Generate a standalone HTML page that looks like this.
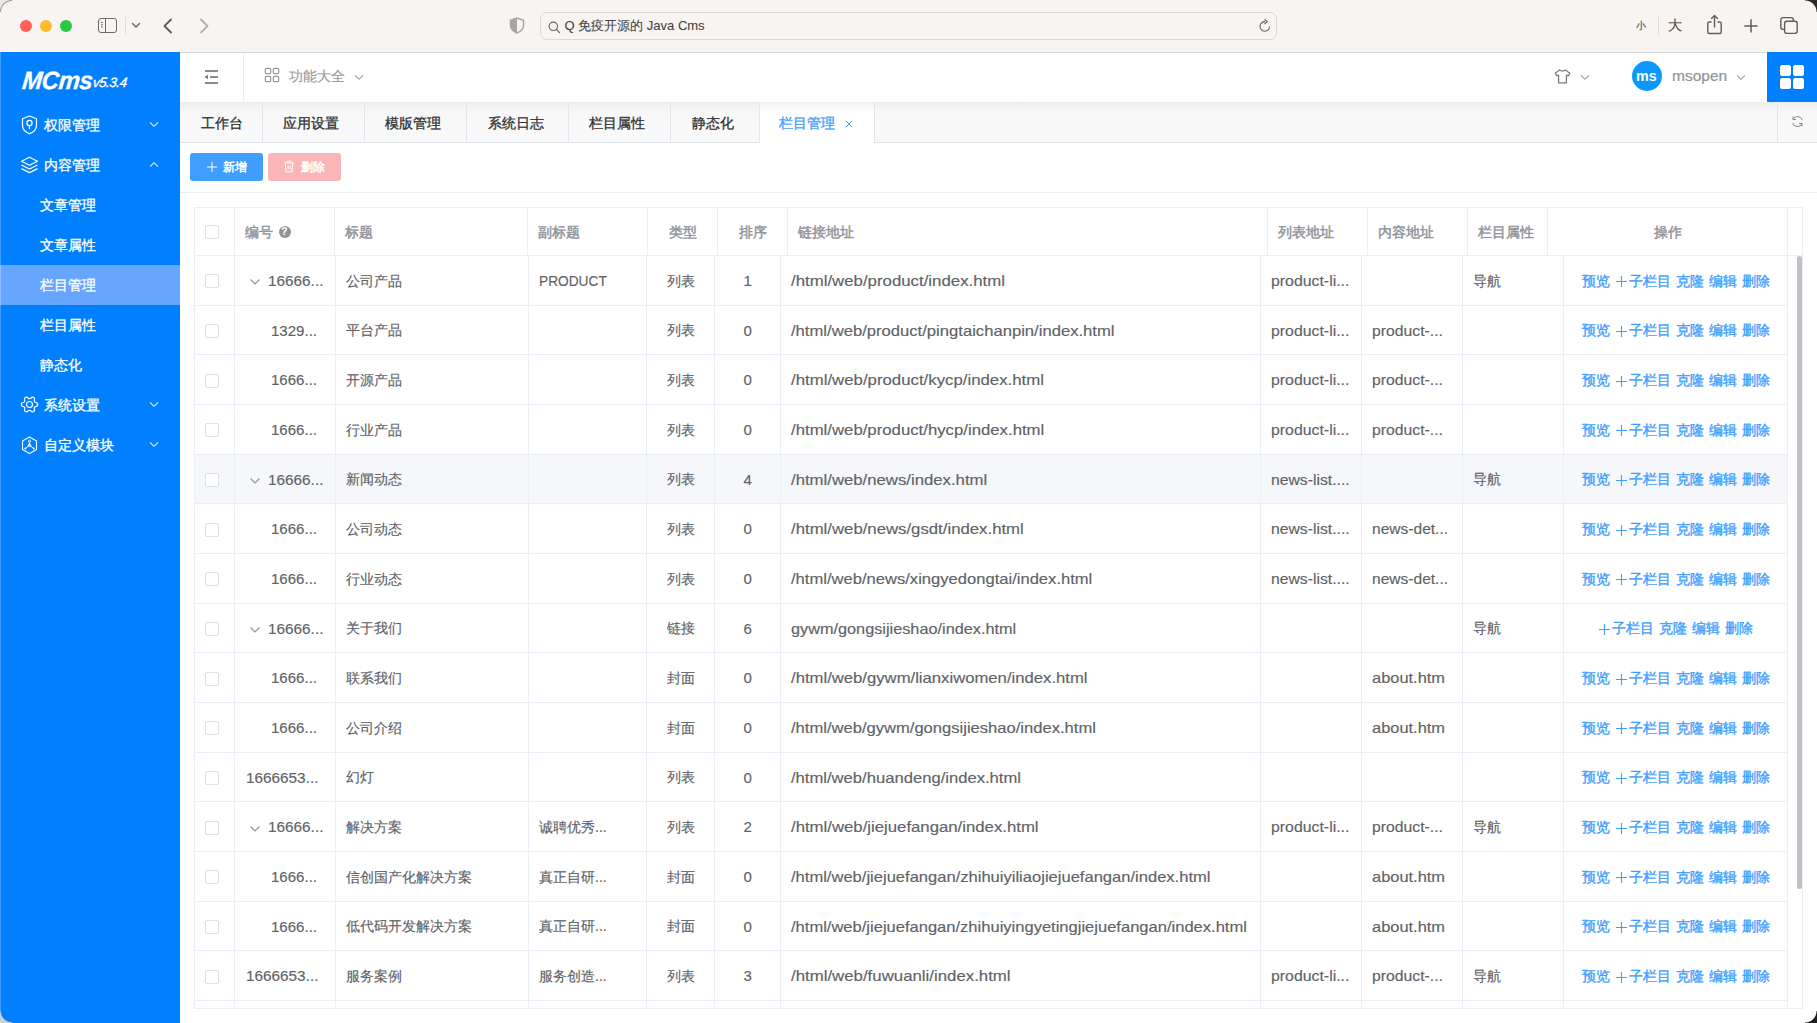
<!DOCTYPE html>
<html><head><meta charset="utf-8"><title>MCms</title>
<style>
html,body{margin:0;padding:0;}
body{width:1817px;height:1023px;overflow:hidden;position:relative;background:#fff;font-family:"Liberation Sans",sans-serif;}
body>div,body>svg{position:absolute;box-sizing:content-box;}
.t{white-space:nowrap;transform-origin:0 0;}
.b{-webkit-text-stroke-width:0.15px;}
.t{-webkit-text-stroke-width:0.15px;}
</style></head><body>
<div style="left:0;top:0;width:1817px;height:52px;background:#f8f4f1"></div>
<div style="left:0;top:52px;width:1817px;height:1px;background:#d9d6d4"></div>
<div style="left:20px;top:20px;width:12px;height:12px;border-radius:50%;background:#fe5f57"></div>
<div style="left:40px;top:20px;width:12px;height:12px;border-radius:50%;background:#febb2e"></div>
<div style="left:60px;top:20px;width:12px;height:12px;border-radius:50%;background:#28c840"></div>
<div style="left:98px;top:18px;width:16.5px;height:12.5px;border:1.5px solid #6b6b6b;border-radius:3px"></div>
<div style="left:104.5px;top:18px;width:1.5px;height:14.5px;background:#6b6b6b"></div>
<div style="left:101px;top:21.5px;width:1.5px;height:1.2px;background:#777;box-shadow:0 2.2px 0 #777,0 4.4px 0 #777"></div>
<div style="left:125px;top:17px;width:1px;height:17px;background:#e0dcda"></div>
<svg style="left:131px;top:22px;" width="10" height="7" viewBox="0 0 10 7"><path d="M1.5 1.5 L5 5 L8.5 1.5" fill="none" stroke="#6b6b6b" stroke-width="1.5" stroke-linecap="round" stroke-linejoin="round"/></svg>
<svg style="left:162px;top:18px;" width="12" height="16" viewBox="0 0 12 16"><path d="M9 1.5 L2.5 8 L9 14.5" fill="none" stroke="#5a5a5a" stroke-width="1.8" stroke-linecap="round" stroke-linejoin="round"/></svg>
<svg style="left:198px;top:18px;" width="12" height="16" viewBox="0 0 12 16"><path d="M3 1.5 L9.5 8 L3 14.5" fill="none" stroke="#b0adab" stroke-width="1.8" stroke-linecap="round" stroke-linejoin="round"/></svg>
<svg style="left:509px;top:17px;" width="16" height="17" viewBox="0 0 16 17"><path d="M8 1 L14.5 3.2 L14.5 8.5 C14.5 12 11.5 14.5 8 16 C4.5 14.5 1.5 12 1.5 8.5 L1.5 3.2 Z" fill="none" stroke="#a9a6a4" stroke-width="1.5"/><path d="M8 1 L1.5 3.2 L1.5 8.5 C1.5 12 4.5 14.5 8 16 Z" fill="#a9a6a4"/></svg>
<div style="left:540px;top:12px;width:735px;height:26px;border:1px solid #dcd8d6;border-radius:7px;background:#f8f4f1"></div>
<svg style="left:547.5px;top:20.5px;" width="14" height="14" viewBox="0 0 14 14"><circle cx="5.3" cy="5.3" r="4.2" fill="none" stroke="#666" stroke-width="1.1"/><path d="M8.4 8.4 L11.6 11.6" stroke="#666" stroke-width="1.3" stroke-linecap="round"/></svg>
<div class="t" style="left:564.5px;top:16px;font-size:13px;line-height:20px;color:#454545;font-weight:400;-webkit-text-stroke-width:0.1px;">Q 免疫开源的 Java Cms</div>
<svg style="left:1259px;top:18px;" width="13" height="15" viewBox="0 0 13 15"><path d="M10.6 8.5 A4.8 4.8 0 1 1 6.2 3.6" fill="none" stroke="#666" stroke-width="1.1"/><path d="M5.5 1.2 L8.2 3.6 L5.5 6" fill="none" stroke="#666" stroke-width="1.1" stroke-linejoin="round"/></svg>
<div class="t" style="left:1636px;top:16px;font-size:10px;line-height:20px;color:#4a4a4a;font-weight:400;">小</div>
<div style="left:1658px;top:17px;width:1px;height:18px;background:#dedad8"></div>
<div class="t" style="left:1668px;top:15px;font-size:14px;line-height:20px;color:#4a4a4a;font-weight:400;">大</div>
<svg style="left:1706px;top:14px;" width="17" height="21" viewBox="0 0 17 21"><path d="M5.5 8 L3.3 8 Q1.8 8 1.8 9.5 L1.8 18 Q1.8 19.5 3.3 19.5 L13.7 19.5 Q15.2 19.5 15.2 18 L15.2 9.5 Q15.2 8 13.7 8 L11.5 8" fill="none" stroke="#5e5e5e" stroke-width="1.4"/><path d="M8.5 13 L8.5 1.8 M5.5 4.6 L8.5 1.6 L11.5 4.6" fill="none" stroke="#5e5e5e" stroke-width="1.4" stroke-linecap="round" stroke-linejoin="round"/></svg>
<svg style="left:1743px;top:17.5px;" width="16" height="16" viewBox="0 0 16 16"><path d="M8 1.8 L8 14 M1.8 8 L14 8" stroke="#5e5e5e" stroke-width="1.5" stroke-linecap="round"/></svg>
<svg style="left:1779px;top:16px;" width="20" height="19" viewBox="0 0 20 19"><rect x="1.8" y="1.6" width="12.6" height="11.8" rx="2.4" fill="none" stroke="#5e5e5e" stroke-width="1.4"/><rect x="5.6" y="5.2" width="12.6" height="12.2" rx="2.4" fill="#f8f4f1" stroke="#5e5e5e" stroke-width="1.4"/></svg>
<div style="left:0;top:52px;width:180px;height:971px;background:#0080ff"></div>
<div class="t" style="left:21px;top:65px;font-size:25px;line-height:30px;color:#fff;font-weight:700;font-style:italic;letter-spacing:-0.5px;transform:scaleX(0.96) skewX(-6deg);transform-origin:0 100%;-webkit-text-stroke-width:0.3px">MCms</div>
<div class="t" style="left:91.5px;top:74.5px;font-size:13.5px;line-height:16px;color:#fff;font-weight:400;font-style:italic;letter-spacing:-0.5px;transform:skewX(-6deg);transform-origin:0 100%;-webkit-text-stroke-width:0.35px">v5.3.4</div>
<div style="left:0;top:265px;width:180px;height:40px;background:#66a6ff"></div>
<div class="t" style="left:43.5px;top:114.7px;font-size:14px;line-height:20px;color:#ffffff;font-weight:400;-webkit-text-stroke-width:0.3px;">权限管理</div>
<svg style="left:149px;top:120.5px;opacity:.9" width="10" height="7" viewBox="0 0 10 7"><path d="M1 1.3 L5 5.3 L9 1.3" fill="none" stroke="#fff" stroke-width="1.1"/></svg>
<div class="t" style="left:43.5px;top:154.7px;font-size:14px;line-height:20px;color:#ffffff;font-weight:400;-webkit-text-stroke-width:0.3px;">内容管理</div>
<svg style="left:149px;top:161.0px;opacity:.9" width="10" height="7" viewBox="0 0 10 7"><path d="M1 5.7 L5 1.7 L9 5.7" fill="none" stroke="#fff" stroke-width="1.1"/></svg>
<div class="t" style="left:43.5px;top:394.7px;font-size:14px;line-height:20px;color:#ffffff;font-weight:400;-webkit-text-stroke-width:0.3px;">系统设置</div>
<svg style="left:149px;top:400.5px;opacity:.9" width="10" height="7" viewBox="0 0 10 7"><path d="M1 1.3 L5 5.3 L9 1.3" fill="none" stroke="#fff" stroke-width="1.1"/></svg>
<div class="t" style="left:43.5px;top:434.7px;font-size:14px;line-height:20px;color:#ffffff;font-weight:400;-webkit-text-stroke-width:0.3px;">自定义模块</div>
<svg style="left:149px;top:440.5px;opacity:.9" width="10" height="7" viewBox="0 0 10 7"><path d="M1 1.3 L5 5.3 L9 1.3" fill="none" stroke="#fff" stroke-width="1.1"/></svg>
<svg style="left:21px;top:115px;" width="17" height="20" viewBox="0 0 17 20"><path d="M8.5 1 L15.5 3.8 L15.5 10.5 C15.5 14.5 12 17.3 8.5 18.8 C5 17.3 1.5 14.5 1.5 10.5 L1.5 3.8 Z" fill="none" stroke="#fff" stroke-width="1.2" stroke-linejoin="round"/><circle cx="8.5" cy="8" r="2.6" fill="none" stroke="#fff" stroke-width="1.2"/><path d="M8.5 10.6 L8.5 14" stroke="#fff" stroke-width="1.2"/></svg>
<svg style="left:20px;top:156px;" width="19" height="18" viewBox="0 0 19 18"><path d="M9.5 1.2 L17.5 5.2 L9.5 9.2 L1.5 5.2 Z" fill="none" stroke="#fff" stroke-width="1.2" stroke-linejoin="round"/><path d="M1.5 9 L9.5 13 L17.5 9" fill="none" stroke="#fff" stroke-width="1.2" stroke-linejoin="round"/><path d="M1.5 12.6 L9.5 16.6 L17.5 12.6" fill="none" stroke="#fff" stroke-width="1.2" stroke-linejoin="round"/></svg>
<svg style="left:20px;top:395.2px;" width="19" height="19" viewBox="0 0 19 19"><path d="M17.65 9.50 L17.60 9.92 L17.47 10.34 L17.24 10.73 L16.90 11.07 L16.26 11.31 L15.62 11.49 L15.25 11.71 L14.97 11.94 L14.74 12.17 L14.57 12.42 L14.43 12.70 L14.34 13.02 L14.29 13.38 L14.28 13.80 L14.45 14.45 L14.56 15.12 L14.43 15.59 L14.21 15.98 L13.92 16.31 L13.58 16.56 L13.18 16.73 L12.76 16.82 L12.31 16.82 L11.84 16.70 L11.31 16.26 L10.84 15.79 L10.46 15.59 L10.13 15.45 L9.81 15.38 L9.50 15.35 L9.19 15.38 L8.87 15.45 L8.54 15.59 L8.16 15.79 L7.69 16.26 L7.16 16.70 L6.69 16.82 L6.24 16.82 L5.82 16.73 L5.43 16.56 L5.08 16.31 L4.79 15.98 L4.57 15.59 L4.44 15.12 L4.55 14.45 L4.72 13.80 L4.71 13.38 L4.66 13.02 L4.57 12.70 L4.43 12.42 L4.26 12.17 L4.03 11.94 L3.75 11.71 L3.38 11.49 L2.74 11.31 L2.10 11.07 L1.76 10.73 L1.53 10.34 L1.40 9.92 L1.35 9.50 L1.40 9.08 L1.53 8.66 L1.76 8.27 L2.10 7.93 L2.74 7.69 L3.38 7.51 L3.75 7.29 L4.03 7.06 L4.26 6.83 L4.43 6.58 L4.57 6.30 L4.66 5.98 L4.71 5.62 L4.72 5.20 L4.55 4.55 L4.44 3.88 L4.57 3.41 L4.79 3.02 L5.08 2.69 L5.42 2.44 L5.82 2.27 L6.24 2.18 L6.69 2.18 L7.16 2.30 L7.69 2.74 L8.16 3.21 L8.54 3.41 L8.87 3.55 L9.19 3.62 L9.50 3.65 L9.81 3.62 L10.13 3.55 L10.46 3.41 L10.84 3.21 L11.31 2.74 L11.84 2.30 L12.31 2.18 L12.76 2.18 L13.18 2.27 L13.58 2.44 L13.92 2.69 L14.21 3.02 L14.43 3.41 L14.56 3.88 L14.45 4.55 L14.28 5.20 L14.29 5.62 L14.34 5.98 L14.43 6.30 L14.57 6.58 L14.74 6.83 L14.97 7.06 L15.25 7.29 L15.62 7.51 L16.26 7.69 L16.90 7.93 L17.24 8.27 L17.47 8.66 L17.60 9.08 Z" fill="none" stroke="#fff" stroke-width="1.2" stroke-linejoin="round"/><circle cx="9.5" cy="9.5" r="3" fill="none" stroke="#fff" stroke-width="1.2"/></svg>
<svg style="left:21px;top:435.5px;" width="17" height="19" viewBox="0 0 17 19"><path d="M8.5 1 L15.5 5 L15.5 13.5 L8.5 17.5 L1.5 13.5 L1.5 5 Z" fill="none" stroke="#fff" stroke-width="1.1" stroke-linejoin="round"/><circle cx="8.5" cy="5.2" r="1.1" fill="none" stroke="#fff" stroke-width="0.9"/><path d="M8.5 6.3 L8.5 9.2 M8.5 9.2 L4.8 12.2 M8.5 9.2 L12.2 12.2" fill="none" stroke="#fff" stroke-width="1"/><circle cx="8.5" cy="9.2" r="1.3" fill="none" stroke="#fff" stroke-width="0.9"/><circle cx="4.3" cy="12.6" r="1" fill="#fff"/><circle cx="12.7" cy="12.6" r="1" fill="#fff"/></svg>
<div class="t" style="left:40px;top:194.7px;font-size:14px;line-height:20px;color:#ffffff;font-weight:400;-webkit-text-stroke-width:0.3px;">文章管理</div>
<div class="t" style="left:40px;top:234.7px;font-size:14px;line-height:20px;color:#ffffff;font-weight:400;-webkit-text-stroke-width:0.3px;">文章属性</div>
<div class="t" style="left:40px;top:274.7px;font-size:14px;line-height:20px;color:#ffffff;font-weight:400;-webkit-text-stroke-width:0.3px;">栏目管理</div>
<div class="t" style="left:40px;top:314.7px;font-size:14px;line-height:20px;color:#ffffff;font-weight:400;-webkit-text-stroke-width:0.3px;">栏目属性</div>
<div class="t" style="left:40px;top:354.7px;font-size:14px;line-height:20px;color:#ffffff;font-weight:400;-webkit-text-stroke-width:0.3px;">静态化</div>
<div style="left:180px;top:53px;width:1637px;height:49px;background:#fff;z-index:2"></div>
<svg style="left:204px;top:69px;z-index:3;" width="16" height="16" viewBox="0 0 16 16"><path d="M1 2 L14 2 M6 8 L14 8 M1 14 L14 14" stroke="#666" stroke-width="1.7"/><path d="M0.8 8 L3.8 5.8 L3.8 10.2 Z" fill="#666"/></svg>
<div style="left:243px;top:53px;width:1px;height:49px;background:#ececec;z-index:3;"></div>
<svg style="left:264px;top:67px;z-index:3;" width="16" height="16" viewBox="0 0 16 16"><rect x="1.3" y="1.3" width="5.4" height="5.4" rx="1.2" fill="none" stroke="#999" stroke-width="1.2"/><rect x="9.3" y="1.3" width="5.4" height="5.4" rx="1.2" fill="none" stroke="#999" stroke-width="1.2"/><rect x="1.3" y="9.3" width="5.4" height="5.4" rx="1.2" fill="none" stroke="#999" stroke-width="1.2"/><rect x="9.3" y="9.3" width="5.4" height="5.4" rx="1.2" fill="none" stroke="#999" stroke-width="1.2"/></svg>
<div class="t" style="left:289px;top:66px;font-size:14px;line-height:20px;color:#9a9a9a;font-weight:400;z-index:3;">功能大全</div>
<svg style="left:354px;top:74px;z-index:3;" width="10" height="7" viewBox="0 0 10 7"><path d="M1 1.3 L5 5.3 L9 1.3" fill="none" stroke="#a0a0a0" stroke-width="1.1"/></svg>
<svg style="left:1554px;top:68.5px;z-index:3;" width="17" height="15" viewBox="0 0 17 15"><path d="M5.6 0.9 Q8.5 3.2 11.4 0.9 L15.8 4.3 L14.2 6.9 L12.4 6 L12.4 13.9 L4.6 13.9 L4.6 6 L2.8 6.9 L1.2 4.3 Z" fill="none" stroke="#777" stroke-width="1.2" stroke-linejoin="round"/></svg>
<svg style="left:1580px;top:74px;z-index:3;" width="10" height="7" viewBox="0 0 10 7"><path d="M1 1.3 L5 5.3 L9 1.3" fill="none" stroke="#a0a0a0" stroke-width="1.1"/></svg>
<div style="left:1632px;top:61px;width:30px;height:30px;border-radius:50%;background:#0a98ff;z-index:3;"></div>
<div class="t" style="left:1635.8px;top:65.5px;font-size:15.5px;line-height:20px;color:#fff;font-weight:700;transform:scaleX(0.9200);z-index:3;-webkit-text-stroke-width:0px;">ms</div>
<div class="t" style="left:1671.8px;top:66px;font-size:15px;line-height:20px;color:#909399;font-weight:400;transform:scaleX(1.0337);z-index:3;-webkit-text-stroke-width:0.2px;">msopen</div>
<svg style="left:1736px;top:74px;z-index:3;" width="10" height="7" viewBox="0 0 10 7"><path d="M1 1.3 L5 5.3 L9 1.3" fill="none" stroke="#a0a0a0" stroke-width="1.1"/></svg>
<div style="left:1767px;top:52px;width:50px;height:50px;background:#0080ff;z-index:3;"></div>
<svg style="left:1780px;top:65px;z-index:3;" width="24" height="24" viewBox="0 0 24 24"><rect x="0" y="0" width="11" height="11" rx="2.2" fill="#fff"/><rect x="13" y="0" width="11" height="11" rx="2.2" fill="#fff"/><rect x="0" y="13" width="11" height="11" rx="2.2" fill="#fff"/><rect x="13" y="13" width="11" height="11" rx="2.2" fill="#fff"/></svg>
<div style="left:180px;top:102px;width:1637px;height:40px;background:linear-gradient(to bottom,#ececec 0,#f4f4f4 5px,#f8f8f8 12px,#f9f9f9 100%)"></div>
<div style="left:180px;top:142px;width:1637px;height:1px;background:#dfe3ea"></div>
<div style="left:262px;top:102px;width:1px;height:40px;background:#e2e5ec"></div>
<div style="left:364px;top:102px;width:1px;height:40px;background:#e2e5ec"></div>
<div style="left:466px;top:102px;width:1px;height:40px;background:#e2e5ec"></div>
<div style="left:568px;top:102px;width:1px;height:40px;background:#e2e5ec"></div>
<div style="left:670px;top:102px;width:1px;height:40px;background:#e2e5ec"></div>
<div style="left:759px;top:102px;width:1px;height:40px;background:#e2e5ec"></div>
<div style="left:874px;top:102px;width:1px;height:40px;background:#e2e5ec"></div>
<div style="left:1777px;top:102px;width:1px;height:40px;background:#e2e5ec"></div>
<div style="left:760px;top:102px;width:114px;height:41px;background:linear-gradient(to bottom,#f0f0f0 0,#fafafa 6px,#fff 12px)"></div>
<div class="t" style="left:201px;top:112.5px;font-size:14px;line-height:20px;color:#303133;font-weight:400;-webkit-text-stroke-width:0.3px;">工作台</div>
<div class="t" style="left:283px;top:112.5px;font-size:14px;line-height:20px;color:#303133;font-weight:400;-webkit-text-stroke-width:0.3px;">应用设置</div>
<div class="t" style="left:385px;top:112.5px;font-size:14px;line-height:20px;color:#303133;font-weight:400;-webkit-text-stroke-width:0.3px;">模版管理</div>
<div class="t" style="left:487.5px;top:112.5px;font-size:14px;line-height:20px;color:#303133;font-weight:400;-webkit-text-stroke-width:0.3px;">系统日志</div>
<div class="t" style="left:589px;top:112.5px;font-size:14px;line-height:20px;color:#303133;font-weight:400;-webkit-text-stroke-width:0.3px;">栏目属性</div>
<div class="t" style="left:692px;top:112.5px;font-size:14px;line-height:20px;color:#303133;font-weight:400;-webkit-text-stroke-width:0.3px;">静态化</div>
<div class="t" style="left:779px;top:112.5px;font-size:14px;line-height:20px;color:#409eff;font-weight:400;-webkit-text-stroke-width:0.3px;">栏目管理</div>
<svg style="left:845px;top:120px;" width="8" height="8" viewBox="0 0 8 8"><path d="M0.8 0.8 L7.2 7.2 M7.2 0.8 L0.8 7.2" stroke="#409eff" stroke-width="1"/></svg>
<svg style="left:1791px;top:115px;" width="13" height="13" viewBox="0 0 13 13"><path d="M11.3 5.2 A5 5 0 0 0 2 4.2" fill="none" stroke="#8a8a8a" stroke-width="1"/><path d="M1.7 7.8 A5 5 0 0 0 11 8.8" fill="none" stroke="#8a8a8a" stroke-width="1"/><path d="M2 1.5 L2 4.5 L5 4.5" fill="none" stroke="#8a8a8a" stroke-width="1"/><path d="M11 11.5 L11 8.5 L8 8.5" fill="none" stroke="#8a8a8a" stroke-width="1"/></svg>
<div style="left:190px;top:153px;width:72.5px;height:27.5px;background:#409eff;border-radius:3px"></div>
<svg style="left:207px;top:161.5px;" width="10" height="10" viewBox="0 0 10 10"><path d="M5 0 L5 10 M0 5 L10 5" stroke="#fff" stroke-width="1"/></svg>
<div class="t" style="left:222.5px;top:157px;font-size:12px;line-height:20px;color:#fff;font-weight:700;-webkit-text-stroke-width:0px;">新增</div>
<div style="left:268px;top:153px;width:72.5px;height:27.5px;background:#fab6b6;border-radius:3px"></div>
<svg style="left:283px;top:160px;" width="12" height="13" viewBox="0 0 12 13"><path d="M1 3 L11 3 M4.2 3 L4.2 1.2 L7.8 1.2 L7.8 3 M2.5 3.5 L2.8 11.8 L9.2 11.8 L9.5 3.5 M5 5.5 L5 9.5 M7 5.5 L7 9.5" fill="none" stroke="#fff" stroke-width="1"/></svg>
<div class="t" style="left:300.5px;top:157px;font-size:12px;line-height:20px;color:#fff;font-weight:700;-webkit-text-stroke-width:0px;">删除</div>
<div style="left:180px;top:192px;width:1637px;height:1px;background:#ebeef5"></div>
<div style="left:194px;top:454px;width:1593px;height:49px;background:#f5f7fa"></div>
<div style="left:1797px;top:256px;width:5px;height:633px;background:#c1c1c5;border-radius:3px"></div>
<div style="left:194px;top:207px;width:1609px;height:1px;background:#ebeef5"></div>
<div style="left:194px;top:1008px;width:1609px;height:1px;background:#ebeef5"></div>
<div style="left:194px;top:207px;width:1px;height:802px;background:#ebeef5"></div>
<div style="left:1802px;top:207px;width:1px;height:802px;background:#ebeef5"></div>
<div style="left:194px;top:255px;width:1608px;height:1px;background:#ebeef5"></div>
<div style="left:234px;top:207px;width:1px;height:48px;background:#ebeef5"></div>
<div style="left:334px;top:207px;width:1px;height:48px;background:#ebeef5"></div>
<div style="left:527px;top:207px;width:1px;height:48px;background:#ebeef5"></div>
<div style="left:647px;top:207px;width:1px;height:48px;background:#ebeef5"></div>
<div style="left:717px;top:207px;width:1px;height:48px;background:#ebeef5"></div>
<div style="left:787px;top:207px;width:1px;height:48px;background:#ebeef5"></div>
<div style="left:1267px;top:207px;width:1px;height:48px;background:#ebeef5"></div>
<div style="left:1367px;top:207px;width:1px;height:48px;background:#ebeef5"></div>
<div style="left:1467px;top:207px;width:1px;height:48px;background:#ebeef5"></div>
<div style="left:1547px;top:207px;width:1px;height:48px;background:#ebeef5"></div>
<div style="left:1787px;top:207px;width:1px;height:48px;background:#ebeef5"></div>
<div style="left:234px;top:255px;width:1px;height:753px;background:#ebeef5"></div>
<div style="left:335px;top:255px;width:1px;height:753px;background:#ebeef5"></div>
<div style="left:528px;top:255px;width:1px;height:753px;background:#ebeef5"></div>
<div style="left:646px;top:255px;width:1px;height:753px;background:#ebeef5"></div>
<div style="left:714px;top:255px;width:1px;height:753px;background:#ebeef5"></div>
<div style="left:780px;top:255px;width:1px;height:753px;background:#ebeef5"></div>
<div style="left:1260px;top:255px;width:1px;height:753px;background:#ebeef5"></div>
<div style="left:1361px;top:255px;width:1px;height:753px;background:#ebeef5"></div>
<div style="left:1462px;top:255px;width:1px;height:753px;background:#ebeef5"></div>
<div style="left:1563px;top:255px;width:1px;height:753px;background:#ebeef5"></div>
<div style="left:1787px;top:255px;width:1px;height:753px;background:#ebeef5"></div>
<div style="left:194px;top:305px;width:1593px;height:1px;background:#ebeef5"></div>
<div style="left:194px;top:354px;width:1593px;height:1px;background:#ebeef5"></div>
<div style="left:194px;top:404px;width:1593px;height:1px;background:#ebeef5"></div>
<div style="left:194px;top:454px;width:1593px;height:1px;background:#ebeef5"></div>
<div style="left:194px;top:503px;width:1593px;height:1px;background:#ebeef5"></div>
<div style="left:194px;top:553px;width:1593px;height:1px;background:#ebeef5"></div>
<div style="left:194px;top:603px;width:1593px;height:1px;background:#ebeef5"></div>
<div style="left:194px;top:652px;width:1593px;height:1px;background:#ebeef5"></div>
<div style="left:194px;top:702px;width:1593px;height:1px;background:#ebeef5"></div>
<div style="left:194px;top:752px;width:1593px;height:1px;background:#ebeef5"></div>
<div style="left:194px;top:801px;width:1593px;height:1px;background:#ebeef5"></div>
<div style="left:194px;top:851px;width:1593px;height:1px;background:#ebeef5"></div>
<div style="left:194px;top:901px;width:1593px;height:1px;background:#ebeef5"></div>
<div style="left:194px;top:950px;width:1593px;height:1px;background:#ebeef5"></div>
<div style="left:194px;top:1000px;width:1593px;height:1px;background:#ebeef5"></div>
<div style="left:205px;top:225px;width:12px;height:12px;border:1px solid #dcdfe6;border-radius:2px;background:#fff"></div>
<div class="t" style="left:245px;top:222px;font-size:14px;line-height:20px;color:#909399;font-weight:400;-webkit-text-stroke-width:0.45px;">编号</div>
<div style="left:278.5px;top:225.5px;width:12.5px;height:12.5px;border-radius:50%;background:#909399"></div>
<div class="t" style="left:281.3px;top:224.5px;font-size:10px;line-height:14px;color:#fff;font-weight:700;">?</div>
<div class="t" style="left:345px;top:222px;font-size:14px;line-height:20px;color:#909399;font-weight:400;-webkit-text-stroke-width:0.45px;">标题</div>
<div class="t" style="left:538px;top:222px;font-size:14px;line-height:20px;color:#909399;font-weight:400;-webkit-text-stroke-width:0.45px;">副标题</div>
<div class="t" style="left:668.5px;top:222px;font-size:14px;line-height:20px;color:#909399;font-weight:400;-webkit-text-stroke-width:0.45px;">类型</div>
<div class="t" style="left:738.5px;top:222px;font-size:14px;line-height:20px;color:#909399;font-weight:400;-webkit-text-stroke-width:0.45px;">排序</div>
<div class="t" style="left:798px;top:222px;font-size:14px;line-height:20px;color:#909399;font-weight:400;-webkit-text-stroke-width:0.45px;">链接地址</div>
<div class="t" style="left:1278px;top:222px;font-size:14px;line-height:20px;color:#909399;font-weight:400;-webkit-text-stroke-width:0.45px;">列表地址</div>
<div class="t" style="left:1378px;top:222px;font-size:14px;line-height:20px;color:#909399;font-weight:400;-webkit-text-stroke-width:0.45px;">内容地址</div>
<div class="t" style="left:1478px;top:222px;font-size:14px;line-height:20px;color:#909399;font-weight:400;-webkit-text-stroke-width:0.45px;">栏目属性</div>
<div class="t" style="left:1653.5px;top:222px;font-size:14px;line-height:20px;color:#909399;font-weight:400;-webkit-text-stroke-width:0.45px;">操作</div>
<div style="left:205px;top:274px;width:12px;height:12px;border:1px solid #dcdfe6;border-radius:2px;background:#fff"></div>
<svg style="left:249px;top:278px;" width="12" height="8" viewBox="0 0 12 8"><path d="M1.5 1.5 L6 6 L10.5 1.5" fill="none" stroke="#909399" stroke-width="1.1"/></svg>
<div class="t" style="left:268px;top:271px;font-size:15px;line-height:20px;color:#606266;font-weight:400;transform:scaleX(1.0218);">16666...</div>
<div class="t b" style="left:345.5px;top:271px;font-size:14px;line-height:20px;color:#606266;font-weight:400;">公司产品</div>
<div class="t" style="left:539px;top:271px;font-size:15px;line-height:20px;color:#606266;font-weight:400;transform:scaleX(0.9141);">PRODUCT</div>
<div class="t b" style="left:666.5px;top:271px;font-size:14px;line-height:20px;color:#606266;font-weight:400;">列表</div>
<div class="t" style="left:743.5px;top:271px;font-size:15px;line-height:20px;color:#606266;font-weight:400;">1</div>
<div class="t" style="left:791.2px;top:271px;font-size:15px;line-height:20px;color:#606266;font-weight:400;transform:scaleX(1.1209);">/html/web/product/index.html</div>
<div class="t" style="left:1271.3px;top:271px;font-size:15px;line-height:20px;color:#606266;font-weight:400;transform:scaleX(1.0566);">product-li...</div>
<div class="t b" style="left:1473.2px;top:271px;font-size:14px;line-height:20px;color:#606266;font-weight:400;">导航</div>
<div class="t" style="left:1582px;top:271px;font-size:14px;line-height:20px;color:#409eff;font-weight:400;-webkit-text-stroke-width:0.35px;">预览</div>
<svg style="left:1616px;top:276.3px;" width="11" height="11" viewBox="0 0 11 11"><path d="M5.5 0 L5.5 11 M0 5.5 L11 5.5" stroke="#409eff" stroke-width="1.1"/></svg>
<div class="t" style="left:1629px;top:271px;font-size:14px;line-height:20px;color:#409eff;font-weight:400;-webkit-text-stroke-width:0.35px;">子栏目</div>
<div class="t" style="left:1676px;top:271px;font-size:14px;line-height:20px;color:#409eff;font-weight:400;-webkit-text-stroke-width:0.35px;">克隆</div>
<div class="t" style="left:1709px;top:271px;font-size:14px;line-height:20px;color:#409eff;font-weight:400;-webkit-text-stroke-width:0.35px;">编辑</div>
<div class="t" style="left:1742px;top:271px;font-size:14px;line-height:20px;color:#409eff;font-weight:400;-webkit-text-stroke-width:0.35px;">删除</div>
<div style="left:205px;top:324px;width:12px;height:12px;border:1px solid #dcdfe6;border-radius:2px;background:#fff"></div>
<div class="t" style="left:271px;top:321px;font-size:15px;line-height:20px;color:#606266;font-weight:400;transform:scaleX(1.0027);">1329...</div>
<div class="t b" style="left:345.5px;top:320px;font-size:14px;line-height:20px;color:#606266;font-weight:400;">平台产品</div>
<div class="t b" style="left:666.5px;top:320px;font-size:14px;line-height:20px;color:#606266;font-weight:400;">列表</div>
<div class="t" style="left:743.5px;top:321px;font-size:15px;line-height:20px;color:#606266;font-weight:400;">0</div>
<div class="t" style="left:791.2px;top:321px;font-size:15px;line-height:20px;color:#606266;font-weight:400;transform:scaleX(1.1085);">/html/web/product/pingtaichanpin/index.html</div>
<div class="t" style="left:1271.3px;top:321px;font-size:15px;line-height:20px;color:#606266;font-weight:400;transform:scaleX(1.0566);">product-li...</div>
<div class="t" style="left:1372.2px;top:321px;font-size:15px;line-height:20px;color:#606266;font-weight:400;transform:scaleX(1.0499);">product-...</div>
<div class="t" style="left:1582px;top:320px;font-size:14px;line-height:20px;color:#409eff;font-weight:400;-webkit-text-stroke-width:0.35px;">预览</div>
<svg style="left:1616px;top:326.0px;" width="11" height="11" viewBox="0 0 11 11"><path d="M5.5 0 L5.5 11 M0 5.5 L11 5.5" stroke="#409eff" stroke-width="1.1"/></svg>
<div class="t" style="left:1629px;top:320px;font-size:14px;line-height:20px;color:#409eff;font-weight:400;-webkit-text-stroke-width:0.35px;">子栏目</div>
<div class="t" style="left:1676px;top:320px;font-size:14px;line-height:20px;color:#409eff;font-weight:400;-webkit-text-stroke-width:0.35px;">克隆</div>
<div class="t" style="left:1709px;top:320px;font-size:14px;line-height:20px;color:#409eff;font-weight:400;-webkit-text-stroke-width:0.35px;">编辑</div>
<div class="t" style="left:1742px;top:320px;font-size:14px;line-height:20px;color:#409eff;font-weight:400;-webkit-text-stroke-width:0.35px;">删除</div>
<div style="left:205px;top:374px;width:12px;height:12px;border:1px solid #dcdfe6;border-radius:2px;background:#fff"></div>
<div class="t" style="left:271px;top:370px;font-size:15px;line-height:20px;color:#606266;font-weight:400;transform:scaleX(1.0027);">1666...</div>
<div class="t b" style="left:345.5px;top:370px;font-size:14px;line-height:20px;color:#606266;font-weight:400;">开源产品</div>
<div class="t b" style="left:666.5px;top:370px;font-size:14px;line-height:20px;color:#606266;font-weight:400;">列表</div>
<div class="t" style="left:743.5px;top:370px;font-size:15px;line-height:20px;color:#606266;font-weight:400;">0</div>
<div class="t" style="left:791.2px;top:370px;font-size:15px;line-height:20px;color:#606266;font-weight:400;transform:scaleX(1.1198);">/html/web/product/kycp/index.html</div>
<div class="t" style="left:1271.3px;top:370px;font-size:15px;line-height:20px;color:#606266;font-weight:400;transform:scaleX(1.0566);">product-li...</div>
<div class="t" style="left:1372.2px;top:370px;font-size:15px;line-height:20px;color:#606266;font-weight:400;transform:scaleX(1.0499);">product-...</div>
<div class="t" style="left:1582px;top:370px;font-size:14px;line-height:20px;color:#409eff;font-weight:400;-webkit-text-stroke-width:0.35px;">预览</div>
<svg style="left:1616px;top:375.6px;" width="11" height="11" viewBox="0 0 11 11"><path d="M5.5 0 L5.5 11 M0 5.5 L11 5.5" stroke="#409eff" stroke-width="1.1"/></svg>
<div class="t" style="left:1629px;top:370px;font-size:14px;line-height:20px;color:#409eff;font-weight:400;-webkit-text-stroke-width:0.35px;">子栏目</div>
<div class="t" style="left:1676px;top:370px;font-size:14px;line-height:20px;color:#409eff;font-weight:400;-webkit-text-stroke-width:0.35px;">克隆</div>
<div class="t" style="left:1709px;top:370px;font-size:14px;line-height:20px;color:#409eff;font-weight:400;-webkit-text-stroke-width:0.35px;">编辑</div>
<div class="t" style="left:1742px;top:370px;font-size:14px;line-height:20px;color:#409eff;font-weight:400;-webkit-text-stroke-width:0.35px;">删除</div>
<div style="left:205px;top:423px;width:12px;height:12px;border:1px solid #dcdfe6;border-radius:2px;background:#fff"></div>
<div class="t" style="left:271px;top:420px;font-size:15px;line-height:20px;color:#606266;font-weight:400;transform:scaleX(1.0027);">1666...</div>
<div class="t b" style="left:345.5px;top:420px;font-size:14px;line-height:20px;color:#606266;font-weight:400;">行业产品</div>
<div class="t b" style="left:666.5px;top:420px;font-size:14px;line-height:20px;color:#606266;font-weight:400;">列表</div>
<div class="t" style="left:743.5px;top:420px;font-size:15px;line-height:20px;color:#606266;font-weight:400;">0</div>
<div class="t" style="left:791.2px;top:420px;font-size:15px;line-height:20px;color:#606266;font-weight:400;transform:scaleX(1.1169);">/html/web/product/hycp/index.html</div>
<div class="t" style="left:1271.3px;top:420px;font-size:15px;line-height:20px;color:#606266;font-weight:400;transform:scaleX(1.0566);">product-li...</div>
<div class="t" style="left:1372.2px;top:420px;font-size:15px;line-height:20px;color:#606266;font-weight:400;transform:scaleX(1.0499);">product-...</div>
<div class="t" style="left:1582px;top:420px;font-size:14px;line-height:20px;color:#409eff;font-weight:400;-webkit-text-stroke-width:0.35px;">预览</div>
<svg style="left:1616px;top:425.3px;" width="11" height="11" viewBox="0 0 11 11"><path d="M5.5 0 L5.5 11 M0 5.5 L11 5.5" stroke="#409eff" stroke-width="1.1"/></svg>
<div class="t" style="left:1629px;top:420px;font-size:14px;line-height:20px;color:#409eff;font-weight:400;-webkit-text-stroke-width:0.35px;">子栏目</div>
<div class="t" style="left:1676px;top:420px;font-size:14px;line-height:20px;color:#409eff;font-weight:400;-webkit-text-stroke-width:0.35px;">克隆</div>
<div class="t" style="left:1709px;top:420px;font-size:14px;line-height:20px;color:#409eff;font-weight:400;-webkit-text-stroke-width:0.35px;">编辑</div>
<div class="t" style="left:1742px;top:420px;font-size:14px;line-height:20px;color:#409eff;font-weight:400;-webkit-text-stroke-width:0.35px;">删除</div>
<div style="left:205px;top:473px;width:12px;height:12px;border:1px solid #dcdfe6;border-radius:2px;background:#fff"></div>
<svg style="left:249px;top:477px;" width="12" height="8" viewBox="0 0 12 8"><path d="M1.5 1.5 L6 6 L10.5 1.5" fill="none" stroke="#909399" stroke-width="1.1"/></svg>
<div class="t" style="left:268px;top:470px;font-size:15px;line-height:20px;color:#606266;font-weight:400;transform:scaleX(1.0218);">16666...</div>
<div class="t b" style="left:345.5px;top:469px;font-size:14px;line-height:20px;color:#606266;font-weight:400;">新闻动态</div>
<div class="t b" style="left:666.5px;top:469px;font-size:14px;line-height:20px;color:#606266;font-weight:400;">列表</div>
<div class="t" style="left:743.5px;top:470px;font-size:15px;line-height:20px;color:#606266;font-weight:400;">4</div>
<div class="t" style="left:791.2px;top:470px;font-size:15px;line-height:20px;color:#606266;font-weight:400;transform:scaleX(1.1154);">/html/web/news/index.html</div>
<div class="t" style="left:1271.3px;top:470px;font-size:15px;line-height:20px;color:#606266;font-weight:400;transform:scaleX(1.0491);">news-list....</div>
<div class="t b" style="left:1473.2px;top:469px;font-size:14px;line-height:20px;color:#606266;font-weight:400;">导航</div>
<div class="t" style="left:1582px;top:469px;font-size:14px;line-height:20px;color:#409eff;font-weight:400;-webkit-text-stroke-width:0.35px;">预览</div>
<svg style="left:1616px;top:475.0px;" width="11" height="11" viewBox="0 0 11 11"><path d="M5.5 0 L5.5 11 M0 5.5 L11 5.5" stroke="#409eff" stroke-width="1.1"/></svg>
<div class="t" style="left:1629px;top:469px;font-size:14px;line-height:20px;color:#409eff;font-weight:400;-webkit-text-stroke-width:0.35px;">子栏目</div>
<div class="t" style="left:1676px;top:469px;font-size:14px;line-height:20px;color:#409eff;font-weight:400;-webkit-text-stroke-width:0.35px;">克隆</div>
<div class="t" style="left:1709px;top:469px;font-size:14px;line-height:20px;color:#409eff;font-weight:400;-webkit-text-stroke-width:0.35px;">编辑</div>
<div class="t" style="left:1742px;top:469px;font-size:14px;line-height:20px;color:#409eff;font-weight:400;-webkit-text-stroke-width:0.35px;">删除</div>
<div style="left:205px;top:523px;width:12px;height:12px;border:1px solid #dcdfe6;border-radius:2px;background:#fff"></div>
<div class="t" style="left:271px;top:519px;font-size:15px;line-height:20px;color:#606266;font-weight:400;transform:scaleX(1.0027);">1666...</div>
<div class="t b" style="left:345.5px;top:519px;font-size:14px;line-height:20px;color:#606266;font-weight:400;">公司动态</div>
<div class="t b" style="left:666.5px;top:519px;font-size:14px;line-height:20px;color:#606266;font-weight:400;">列表</div>
<div class="t" style="left:743.5px;top:519px;font-size:15px;line-height:20px;color:#606266;font-weight:400;">0</div>
<div class="t" style="left:791.2px;top:519px;font-size:15px;line-height:20px;color:#606266;font-weight:400;transform:scaleX(1.1169);">/html/web/news/gsdt/index.html</div>
<div class="t" style="left:1271.3px;top:519px;font-size:15px;line-height:20px;color:#606266;font-weight:400;transform:scaleX(1.0491);">news-list....</div>
<div class="t" style="left:1372.2px;top:519px;font-size:15px;line-height:20px;color:#606266;font-weight:400;transform:scaleX(1.0371);">news-det...</div>
<div class="t" style="left:1582px;top:519px;font-size:14px;line-height:20px;color:#409eff;font-weight:400;-webkit-text-stroke-width:0.35px;">预览</div>
<svg style="left:1616px;top:524.6px;" width="11" height="11" viewBox="0 0 11 11"><path d="M5.5 0 L5.5 11 M0 5.5 L11 5.5" stroke="#409eff" stroke-width="1.1"/></svg>
<div class="t" style="left:1629px;top:519px;font-size:14px;line-height:20px;color:#409eff;font-weight:400;-webkit-text-stroke-width:0.35px;">子栏目</div>
<div class="t" style="left:1676px;top:519px;font-size:14px;line-height:20px;color:#409eff;font-weight:400;-webkit-text-stroke-width:0.35px;">克隆</div>
<div class="t" style="left:1709px;top:519px;font-size:14px;line-height:20px;color:#409eff;font-weight:400;-webkit-text-stroke-width:0.35px;">编辑</div>
<div class="t" style="left:1742px;top:519px;font-size:14px;line-height:20px;color:#409eff;font-weight:400;-webkit-text-stroke-width:0.35px;">删除</div>
<div style="left:205px;top:572px;width:12px;height:12px;border:1px solid #dcdfe6;border-radius:2px;background:#fff"></div>
<div class="t" style="left:271px;top:569px;font-size:15px;line-height:20px;color:#606266;font-weight:400;transform:scaleX(1.0027);">1666...</div>
<div class="t b" style="left:345.5px;top:569px;font-size:14px;line-height:20px;color:#606266;font-weight:400;">行业动态</div>
<div class="t b" style="left:666.5px;top:569px;font-size:14px;line-height:20px;color:#606266;font-weight:400;">列表</div>
<div class="t" style="left:743.5px;top:569px;font-size:15px;line-height:20px;color:#606266;font-weight:400;">0</div>
<div class="t" style="left:791.2px;top:569px;font-size:15px;line-height:20px;color:#606266;font-weight:400;transform:scaleX(1.1051);">/html/web/news/xingyedongtai/index.html</div>
<div class="t" style="left:1271.3px;top:569px;font-size:15px;line-height:20px;color:#606266;font-weight:400;transform:scaleX(1.0491);">news-list....</div>
<div class="t" style="left:1372.2px;top:569px;font-size:15px;line-height:20px;color:#606266;font-weight:400;transform:scaleX(1.0371);">news-det...</div>
<div class="t" style="left:1582px;top:569px;font-size:14px;line-height:20px;color:#409eff;font-weight:400;-webkit-text-stroke-width:0.35px;">预览</div>
<svg style="left:1616px;top:574.3px;" width="11" height="11" viewBox="0 0 11 11"><path d="M5.5 0 L5.5 11 M0 5.5 L11 5.5" stroke="#409eff" stroke-width="1.1"/></svg>
<div class="t" style="left:1629px;top:569px;font-size:14px;line-height:20px;color:#409eff;font-weight:400;-webkit-text-stroke-width:0.35px;">子栏目</div>
<div class="t" style="left:1676px;top:569px;font-size:14px;line-height:20px;color:#409eff;font-weight:400;-webkit-text-stroke-width:0.35px;">克隆</div>
<div class="t" style="left:1709px;top:569px;font-size:14px;line-height:20px;color:#409eff;font-weight:400;-webkit-text-stroke-width:0.35px;">编辑</div>
<div class="t" style="left:1742px;top:569px;font-size:14px;line-height:20px;color:#409eff;font-weight:400;-webkit-text-stroke-width:0.35px;">删除</div>
<div style="left:205px;top:622px;width:12px;height:12px;border:1px solid #dcdfe6;border-radius:2px;background:#fff"></div>
<svg style="left:249px;top:626px;" width="12" height="8" viewBox="0 0 12 8"><path d="M1.5 1.5 L6 6 L10.5 1.5" fill="none" stroke="#909399" stroke-width="1.1"/></svg>
<div class="t" style="left:268px;top:619px;font-size:15px;line-height:20px;color:#606266;font-weight:400;transform:scaleX(1.0218);">16666...</div>
<div class="t b" style="left:345.5px;top:618px;font-size:14px;line-height:20px;color:#606266;font-weight:400;">关于我们</div>
<div class="t b" style="left:666.5px;top:618px;font-size:14px;line-height:20px;color:#606266;font-weight:400;">链接</div>
<div class="t" style="left:743.5px;top:619px;font-size:15px;line-height:20px;color:#606266;font-weight:400;">6</div>
<div class="t" style="left:791.2px;top:619px;font-size:15px;line-height:20px;color:#606266;font-weight:400;transform:scaleX(1.0847);">gywm/gongsijieshao/index.html</div>
<div class="t b" style="left:1473.2px;top:618px;font-size:14px;line-height:20px;color:#606266;font-weight:400;">导航</div>
<svg style="left:1598.5px;top:624.0px;" width="11" height="11" viewBox="0 0 11 11"><path d="M5.5 0 L5.5 11 M0 5.5 L11 5.5" stroke="#409eff" stroke-width="1.1"/></svg>
<div class="t" style="left:1611.5px;top:618px;font-size:14px;line-height:20px;color:#409eff;font-weight:400;-webkit-text-stroke-width:0.35px;">子栏目</div>
<div class="t" style="left:1658.5px;top:618px;font-size:14px;line-height:20px;color:#409eff;font-weight:400;-webkit-text-stroke-width:0.35px;">克隆</div>
<div class="t" style="left:1691.5px;top:618px;font-size:14px;line-height:20px;color:#409eff;font-weight:400;-webkit-text-stroke-width:0.35px;">编辑</div>
<div class="t" style="left:1724.5px;top:618px;font-size:14px;line-height:20px;color:#409eff;font-weight:400;-webkit-text-stroke-width:0.35px;">删除</div>
<div style="left:205px;top:672px;width:12px;height:12px;border:1px solid #dcdfe6;border-radius:2px;background:#fff"></div>
<div class="t" style="left:271px;top:668px;font-size:15px;line-height:20px;color:#606266;font-weight:400;transform:scaleX(1.0027);">1666...</div>
<div class="t b" style="left:345.5px;top:668px;font-size:14px;line-height:20px;color:#606266;font-weight:400;">联系我们</div>
<div class="t b" style="left:666.5px;top:668px;font-size:14px;line-height:20px;color:#606266;font-weight:400;">封面</div>
<div class="t" style="left:743.5px;top:668px;font-size:15px;line-height:20px;color:#606266;font-weight:400;">0</div>
<div class="t" style="left:791.2px;top:668px;font-size:15px;line-height:20px;color:#606266;font-weight:400;transform:scaleX(1.1115);">/html/web/gywm/lianxiwomen/index.html</div>
<div class="t" style="left:1372.2px;top:668px;font-size:15px;line-height:20px;color:#606266;font-weight:400;transform:scaleX(1.0941);">about.htm</div>
<div class="t" style="left:1582px;top:668px;font-size:14px;line-height:20px;color:#409eff;font-weight:400;-webkit-text-stroke-width:0.35px;">预览</div>
<svg style="left:1616px;top:673.6px;" width="11" height="11" viewBox="0 0 11 11"><path d="M5.5 0 L5.5 11 M0 5.5 L11 5.5" stroke="#409eff" stroke-width="1.1"/></svg>
<div class="t" style="left:1629px;top:668px;font-size:14px;line-height:20px;color:#409eff;font-weight:400;-webkit-text-stroke-width:0.35px;">子栏目</div>
<div class="t" style="left:1676px;top:668px;font-size:14px;line-height:20px;color:#409eff;font-weight:400;-webkit-text-stroke-width:0.35px;">克隆</div>
<div class="t" style="left:1709px;top:668px;font-size:14px;line-height:20px;color:#409eff;font-weight:400;-webkit-text-stroke-width:0.35px;">编辑</div>
<div class="t" style="left:1742px;top:668px;font-size:14px;line-height:20px;color:#409eff;font-weight:400;-webkit-text-stroke-width:0.35px;">删除</div>
<div style="left:205px;top:721px;width:12px;height:12px;border:1px solid #dcdfe6;border-radius:2px;background:#fff"></div>
<div class="t" style="left:271px;top:718px;font-size:15px;line-height:20px;color:#606266;font-weight:400;transform:scaleX(1.0027);">1666...</div>
<div class="t b" style="left:345.5px;top:718px;font-size:14px;line-height:20px;color:#606266;font-weight:400;">公司介绍</div>
<div class="t b" style="left:666.5px;top:718px;font-size:14px;line-height:20px;color:#606266;font-weight:400;">封面</div>
<div class="t" style="left:743.5px;top:718px;font-size:15px;line-height:20px;color:#606266;font-weight:400;">0</div>
<div class="t" style="left:791.2px;top:718px;font-size:15px;line-height:20px;color:#606266;font-weight:400;transform:scaleX(1.1048);">/html/web/gywm/gongsijieshao/index.html</div>
<div class="t" style="left:1372.2px;top:718px;font-size:15px;line-height:20px;color:#606266;font-weight:400;transform:scaleX(1.0941);">about.htm</div>
<div class="t" style="left:1582px;top:718px;font-size:14px;line-height:20px;color:#409eff;font-weight:400;-webkit-text-stroke-width:0.35px;">预览</div>
<svg style="left:1616px;top:723.3px;" width="11" height="11" viewBox="0 0 11 11"><path d="M5.5 0 L5.5 11 M0 5.5 L11 5.5" stroke="#409eff" stroke-width="1.1"/></svg>
<div class="t" style="left:1629px;top:718px;font-size:14px;line-height:20px;color:#409eff;font-weight:400;-webkit-text-stroke-width:0.35px;">子栏目</div>
<div class="t" style="left:1676px;top:718px;font-size:14px;line-height:20px;color:#409eff;font-weight:400;-webkit-text-stroke-width:0.35px;">克隆</div>
<div class="t" style="left:1709px;top:718px;font-size:14px;line-height:20px;color:#409eff;font-weight:400;-webkit-text-stroke-width:0.35px;">编辑</div>
<div class="t" style="left:1742px;top:718px;font-size:14px;line-height:20px;color:#409eff;font-weight:400;-webkit-text-stroke-width:0.35px;">删除</div>
<div style="left:205px;top:771px;width:12px;height:12px;border:1px solid #dcdfe6;border-radius:2px;background:#fff"></div>
<div class="t" style="left:245.5px;top:768px;font-size:15px;line-height:20px;color:#606266;font-weight:400;transform:scaleX(1.0211);">1666653...</div>
<div class="t b" style="left:345.5px;top:767px;font-size:14px;line-height:20px;color:#606266;font-weight:400;">幻灯</div>
<div class="t b" style="left:666.5px;top:767px;font-size:14px;line-height:20px;color:#606266;font-weight:400;">列表</div>
<div class="t" style="left:743.5px;top:768px;font-size:15px;line-height:20px;color:#606266;font-weight:400;">0</div>
<div class="t" style="left:791.2px;top:768px;font-size:15px;line-height:20px;color:#606266;font-weight:400;transform:scaleX(1.1077);">/html/web/huandeng/index.html</div>
<div class="t" style="left:1582px;top:767px;font-size:14px;line-height:20px;color:#409eff;font-weight:400;-webkit-text-stroke-width:0.35px;">预览</div>
<svg style="left:1616px;top:773.0px;" width="11" height="11" viewBox="0 0 11 11"><path d="M5.5 0 L5.5 11 M0 5.5 L11 5.5" stroke="#409eff" stroke-width="1.1"/></svg>
<div class="t" style="left:1629px;top:767px;font-size:14px;line-height:20px;color:#409eff;font-weight:400;-webkit-text-stroke-width:0.35px;">子栏目</div>
<div class="t" style="left:1676px;top:767px;font-size:14px;line-height:20px;color:#409eff;font-weight:400;-webkit-text-stroke-width:0.35px;">克隆</div>
<div class="t" style="left:1709px;top:767px;font-size:14px;line-height:20px;color:#409eff;font-weight:400;-webkit-text-stroke-width:0.35px;">编辑</div>
<div class="t" style="left:1742px;top:767px;font-size:14px;line-height:20px;color:#409eff;font-weight:400;-webkit-text-stroke-width:0.35px;">删除</div>
<div style="left:205px;top:821px;width:12px;height:12px;border:1px solid #dcdfe6;border-radius:2px;background:#fff"></div>
<svg style="left:249px;top:825px;" width="12" height="8" viewBox="0 0 12 8"><path d="M1.5 1.5 L6 6 L10.5 1.5" fill="none" stroke="#909399" stroke-width="1.1"/></svg>
<div class="t" style="left:268px;top:817px;font-size:15px;line-height:20px;color:#606266;font-weight:400;transform:scaleX(1.0218);">16666...</div>
<div class="t b" style="left:345.5px;top:817px;font-size:14px;line-height:20px;color:#606266;font-weight:400;">解决方案</div>
<div class="t b" style="left:539px;top:817px;font-size:14px;line-height:20px;color:#606266;font-weight:400;">诚聘优秀...</div>
<div class="t b" style="left:666.5px;top:817px;font-size:14px;line-height:20px;color:#606266;font-weight:400;">列表</div>
<div class="t" style="left:743.5px;top:817px;font-size:15px;line-height:20px;color:#606266;font-weight:400;">2</div>
<div class="t" style="left:791.2px;top:817px;font-size:15px;line-height:20px;color:#606266;font-weight:400;transform:scaleX(1.1163);">/html/web/jiejuefangan/index.html</div>
<div class="t" style="left:1271.3px;top:817px;font-size:15px;line-height:20px;color:#606266;font-weight:400;transform:scaleX(1.0566);">product-li...</div>
<div class="t" style="left:1372.2px;top:817px;font-size:15px;line-height:20px;color:#606266;font-weight:400;transform:scaleX(1.0499);">product-...</div>
<div class="t b" style="left:1473.2px;top:817px;font-size:14px;line-height:20px;color:#606266;font-weight:400;">导航</div>
<div class="t" style="left:1582px;top:817px;font-size:14px;line-height:20px;color:#409eff;font-weight:400;-webkit-text-stroke-width:0.35px;">预览</div>
<svg style="left:1616px;top:822.6px;" width="11" height="11" viewBox="0 0 11 11"><path d="M5.5 0 L5.5 11 M0 5.5 L11 5.5" stroke="#409eff" stroke-width="1.1"/></svg>
<div class="t" style="left:1629px;top:817px;font-size:14px;line-height:20px;color:#409eff;font-weight:400;-webkit-text-stroke-width:0.35px;">子栏目</div>
<div class="t" style="left:1676px;top:817px;font-size:14px;line-height:20px;color:#409eff;font-weight:400;-webkit-text-stroke-width:0.35px;">克隆</div>
<div class="t" style="left:1709px;top:817px;font-size:14px;line-height:20px;color:#409eff;font-weight:400;-webkit-text-stroke-width:0.35px;">编辑</div>
<div class="t" style="left:1742px;top:817px;font-size:14px;line-height:20px;color:#409eff;font-weight:400;-webkit-text-stroke-width:0.35px;">删除</div>
<div style="left:205px;top:870px;width:12px;height:12px;border:1px solid #dcdfe6;border-radius:2px;background:#fff"></div>
<div class="t" style="left:271px;top:867px;font-size:15px;line-height:20px;color:#606266;font-weight:400;transform:scaleX(1.0027);">1666...</div>
<div class="t b" style="left:345.5px;top:867px;font-size:14px;line-height:20px;color:#606266;font-weight:400;">信创国产化解决方案</div>
<div class="t b" style="left:539px;top:867px;font-size:14px;line-height:20px;color:#606266;font-weight:400;">真正自研...</div>
<div class="t b" style="left:666.5px;top:867px;font-size:14px;line-height:20px;color:#606266;font-weight:400;">封面</div>
<div class="t" style="left:743.5px;top:867px;font-size:15px;line-height:20px;color:#606266;font-weight:400;">0</div>
<div class="t" style="left:791.2px;top:867px;font-size:15px;line-height:20px;color:#606266;font-weight:400;transform:scaleX(1.1032);">/html/web/jiejuefangan/zhihuiyiliaojiejuefangan/index.html</div>
<div class="t" style="left:1372.2px;top:867px;font-size:15px;line-height:20px;color:#606266;font-weight:400;transform:scaleX(1.0941);">about.htm</div>
<div class="t" style="left:1582px;top:867px;font-size:14px;line-height:20px;color:#409eff;font-weight:400;-webkit-text-stroke-width:0.35px;">预览</div>
<svg style="left:1616px;top:872.3px;" width="11" height="11" viewBox="0 0 11 11"><path d="M5.5 0 L5.5 11 M0 5.5 L11 5.5" stroke="#409eff" stroke-width="1.1"/></svg>
<div class="t" style="left:1629px;top:867px;font-size:14px;line-height:20px;color:#409eff;font-weight:400;-webkit-text-stroke-width:0.35px;">子栏目</div>
<div class="t" style="left:1676px;top:867px;font-size:14px;line-height:20px;color:#409eff;font-weight:400;-webkit-text-stroke-width:0.35px;">克隆</div>
<div class="t" style="left:1709px;top:867px;font-size:14px;line-height:20px;color:#409eff;font-weight:400;-webkit-text-stroke-width:0.35px;">编辑</div>
<div class="t" style="left:1742px;top:867px;font-size:14px;line-height:20px;color:#409eff;font-weight:400;-webkit-text-stroke-width:0.35px;">删除</div>
<div style="left:205px;top:920px;width:12px;height:12px;border:1px solid #dcdfe6;border-radius:2px;background:#fff"></div>
<div class="t" style="left:271px;top:917px;font-size:15px;line-height:20px;color:#606266;font-weight:400;transform:scaleX(1.0027);">1666...</div>
<div class="t b" style="left:345.5px;top:916px;font-size:14px;line-height:20px;color:#606266;font-weight:400;">低代码开发解决方案</div>
<div class="t b" style="left:539px;top:916px;font-size:14px;line-height:20px;color:#606266;font-weight:400;">真正自研...</div>
<div class="t b" style="left:666.5px;top:916px;font-size:14px;line-height:20px;color:#606266;font-weight:400;">封面</div>
<div class="t" style="left:743.5px;top:917px;font-size:15px;line-height:20px;color:#606266;font-weight:400;">0</div>
<div class="t" style="left:791.2px;top:917px;font-size:15px;line-height:20px;color:#606266;font-weight:400;transform:scaleX(1.1022);">/html/web/jiejuefangan/zhihuiyingyetingjiejuefangan/index.html</div>
<div class="t" style="left:1372.2px;top:917px;font-size:15px;line-height:20px;color:#606266;font-weight:400;transform:scaleX(1.0941);">about.htm</div>
<div class="t" style="left:1582px;top:916px;font-size:14px;line-height:20px;color:#409eff;font-weight:400;-webkit-text-stroke-width:0.35px;">预览</div>
<svg style="left:1616px;top:922.0px;" width="11" height="11" viewBox="0 0 11 11"><path d="M5.5 0 L5.5 11 M0 5.5 L11 5.5" stroke="#409eff" stroke-width="1.1"/></svg>
<div class="t" style="left:1629px;top:916px;font-size:14px;line-height:20px;color:#409eff;font-weight:400;-webkit-text-stroke-width:0.35px;">子栏目</div>
<div class="t" style="left:1676px;top:916px;font-size:14px;line-height:20px;color:#409eff;font-weight:400;-webkit-text-stroke-width:0.35px;">克隆</div>
<div class="t" style="left:1709px;top:916px;font-size:14px;line-height:20px;color:#409eff;font-weight:400;-webkit-text-stroke-width:0.35px;">编辑</div>
<div class="t" style="left:1742px;top:916px;font-size:14px;line-height:20px;color:#409eff;font-weight:400;-webkit-text-stroke-width:0.35px;">删除</div>
<div style="left:205px;top:970px;width:12px;height:12px;border:1px solid #dcdfe6;border-radius:2px;background:#fff"></div>
<div class="t" style="left:245.5px;top:966px;font-size:15px;line-height:20px;color:#606266;font-weight:400;transform:scaleX(1.0211);">1666653...</div>
<div class="t b" style="left:345.5px;top:966px;font-size:14px;line-height:20px;color:#606266;font-weight:400;">服务案例</div>
<div class="t b" style="left:539px;top:966px;font-size:14px;line-height:20px;color:#606266;font-weight:400;">服务创造...</div>
<div class="t b" style="left:666.5px;top:966px;font-size:14px;line-height:20px;color:#606266;font-weight:400;">列表</div>
<div class="t" style="left:743.5px;top:966px;font-size:15px;line-height:20px;color:#606266;font-weight:400;">3</div>
<div class="t" style="left:791.2px;top:966px;font-size:15px;line-height:20px;color:#606266;font-weight:400;transform:scaleX(1.1208);">/html/web/fuwuanli/index.html</div>
<div class="t" style="left:1271.3px;top:966px;font-size:15px;line-height:20px;color:#606266;font-weight:400;transform:scaleX(1.0566);">product-li...</div>
<div class="t" style="left:1372.2px;top:966px;font-size:15px;line-height:20px;color:#606266;font-weight:400;transform:scaleX(1.0499);">product-...</div>
<div class="t b" style="left:1473.2px;top:966px;font-size:14px;line-height:20px;color:#606266;font-weight:400;">导航</div>
<div class="t" style="left:1582px;top:966px;font-size:14px;line-height:20px;color:#409eff;font-weight:400;-webkit-text-stroke-width:0.35px;">预览</div>
<svg style="left:1616px;top:971.6px;" width="11" height="11" viewBox="0 0 11 11"><path d="M5.5 0 L5.5 11 M0 5.5 L11 5.5" stroke="#409eff" stroke-width="1.1"/></svg>
<div class="t" style="left:1629px;top:966px;font-size:14px;line-height:20px;color:#409eff;font-weight:400;-webkit-text-stroke-width:0.35px;">子栏目</div>
<div class="t" style="left:1676px;top:966px;font-size:14px;line-height:20px;color:#409eff;font-weight:400;-webkit-text-stroke-width:0.35px;">克隆</div>
<div class="t" style="left:1709px;top:966px;font-size:14px;line-height:20px;color:#409eff;font-weight:400;-webkit-text-stroke-width:0.35px;">编辑</div>
<div class="t" style="left:1742px;top:966px;font-size:14px;line-height:20px;color:#409eff;font-weight:400;-webkit-text-stroke-width:0.35px;">删除</div>
<div style="left:0;top:0;width:12px;height:12px;background:radial-gradient(circle at 12px 12px, rgba(0,0,0,0) 10.5px, #9a9a9a 11.5px, #e9e9e9 12.5px)"></div>
<div style="left:0;top:1011px;width:12px;height:12px;background:radial-gradient(circle at 12px 0, rgba(0,0,0,0) 10.5px, #cfcfcf 12px)"></div>
<div style="left:0;top:52px;width:1px;height:960px;background:rgba(255,255,255,.25)"></div>
<div style="left:1805px;top:0;width:12px;height:12px;background:radial-gradient(circle at 0 12px, rgba(0,0,0,0) 11px, #2a2a2a 12px)"></div>
<div style="left:1805px;top:1011px;width:12px;height:12px;background:radial-gradient(circle at 0 0, rgba(0,0,0,0) 11px, #1e1e1e 12px)"></div>
</body></html>
